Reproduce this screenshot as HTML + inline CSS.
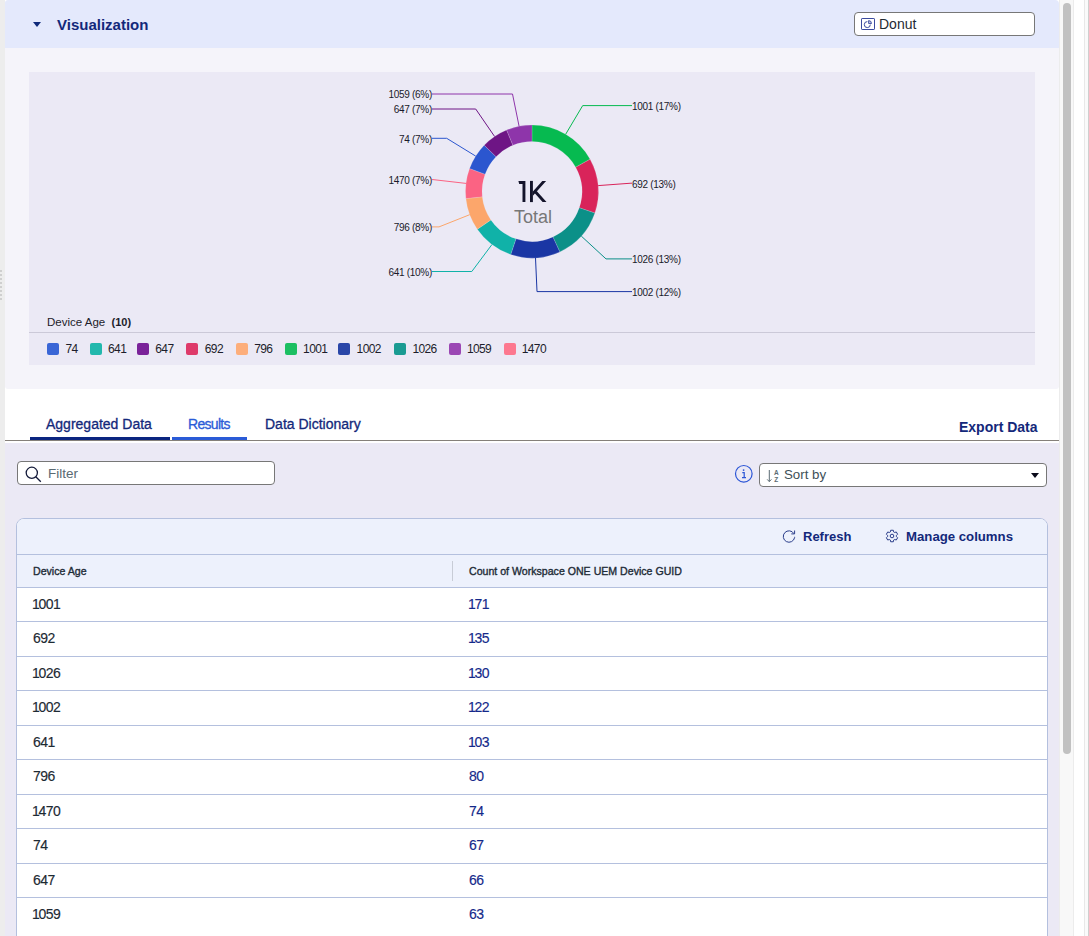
<!DOCTYPE html>
<html><head><meta charset="utf-8">
<style>
*{margin:0;padding:0;box-sizing:border-box}
html,body{width:1089px;height:936px;overflow:hidden;background:#fff;font-family:"Liberation Sans",sans-serif}
.a{position:absolute}
.t{position:absolute;white-space:nowrap;line-height:1}
#strip{left:0;top:0;width:5px;height:936px;background:#ededed}
#hdr{left:5px;top:0;width:1054px;height:48px;background:#e4e9fc;border-top-left-radius:3px;border-top-right-radius:4px}
#sec1{left:5px;top:48px;width:1054px;height:341px;background:#f5f4fa;border-radius:0 0 3px 3px}
#chart{left:29px;top:72px;width:1006px;height:293px;background:#ebe9f5}
#sec2{left:5px;top:389px;width:1054px;height:54px;background:#fff}
#sec3{left:5px;top:443px;width:1054px;height:493px;background:#ebe9f5}
.box{position:absolute;background:#fff;border:1px solid #777;border-radius:4px}
.card{left:16px;top:518px;width:1032px;height:430px;background:#fff;border:1px solid #b4c0de;border-radius:8px 8px 0 0;overflow:hidden}
.c1{left:33px;font-size:14px;color:#1d2a33;letter-spacing:-0.5px;-webkit-text-stroke:0.15px}
.c2{left:469px;font-size:14px;color:#14298a;letter-spacing:-0.5px;-webkit-text-stroke:0.15px}
.dl{font-size:10px;color:#1a1a2a;letter-spacing:-0.3px}
.lt{font-size:12px;color:#1d1d2b;letter-spacing:-0.6px}
</style></head><body>
<div id="strip" class="a"></div>
<div class="a" style="left:0;top:270px;width:2px;height:30px;background:repeating-linear-gradient(#cfcfcf 0 2px,transparent 2px 4px)"></div>
<div id="hdr" class="a"></div>
<div id="sec1" class="a"></div>
<div id="chart" class="a"></div>
<div id="sec2" class="a"></div>
<div id="sec3" class="a"></div>

<!-- header -->
<svg class="a" style="left:33px;top:22px" width="8" height="5" viewBox="0 0 8 5"><path d="M0 0H8L4 5Z" fill="#0f2a7a"/></svg>
<div class="t" style="left:57px;top:17px;font-size:15px;font-weight:bold;color:#13287a">Visualization</div>
<div class="box" style="left:854px;top:12px;width:181px;height:24px"></div>
<svg class="a" style="left:861px;top:18px" width="14" height="12" viewBox="0 0 14 12"><rect x="0.5" y="0.5" width="13" height="11" rx="0.6" fill="none" stroke="#3a4a9e" stroke-width="1"/><path d="M6.3 3.6A3 3 0 1 0 9.3 6.6" fill="none" stroke="#3a4a9e" stroke-width="1"/><path d="M7.6 2.6A2.9 2.9 0 0 1 10.5 5.5H7.6Z" fill="#c5cbe6" stroke="#3a4a9e" stroke-width="0.9"/></svg>
<div class="t" style="left:879px;top:17px;font-size:14px;color:#1f2a33">Donut</div>

<!-- chart panel -->
<svg class="a" style="left:0;top:0" width="1089" height="400" viewBox="0 0 1089 400"><path d="M532.00 125.00A66.5 66.5 0 0 1 590.10 159.15L575.68 167.18A50 50 0 0 0 532.00 141.50Z" fill="#06ba50" stroke="#ebe9f5" stroke-width="0.3" stroke-opacity="0.6"/>
<path d="M590.10 159.15A66.5 66.5 0 0 1 594.89 213.11L579.29 207.75A50 50 0 0 0 575.68 167.18Z" fill="#d9245a" stroke="#ebe9f5" stroke-width="0.3" stroke-opacity="0.6"/>
<path d="M594.89 213.11A66.5 66.5 0 0 1 559.84 251.89L552.93 236.91A50 50 0 0 0 579.29 207.75Z" fill="#0b9088" stroke="#ebe9f5" stroke-width="0.3" stroke-opacity="0.6"/>
<path d="M559.84 251.89A66.5 66.5 0 0 1 510.69 254.49L515.97 238.86A50 50 0 0 0 552.93 236.91Z" fill="#1a36a4" stroke="#ebe9f5" stroke-width="0.3" stroke-opacity="0.6"/>
<path d="M510.69 254.49A66.5 66.5 0 0 1 477.28 229.29L490.86 219.91A50 50 0 0 0 515.97 238.86Z" fill="#10b2a8" stroke="#ebe9f5" stroke-width="0.3" stroke-opacity="0.6"/>
<path d="M477.28 229.29A66.5 66.5 0 0 1 465.88 198.62L482.29 196.85A50 50 0 0 0 490.86 219.91Z" fill="#fca66b" stroke="#ebe9f5" stroke-width="0.3" stroke-opacity="0.6"/>
<path d="M465.88 198.62A66.5 66.5 0 0 1 469.59 168.53L485.08 174.23A50 50 0 0 0 482.29 196.85Z" fill="#fb6383" stroke="#ebe9f5" stroke-width="0.3" stroke-opacity="0.6"/>
<path d="M469.59 168.53A66.5 66.5 0 0 1 484.22 145.25L496.07 156.73A50 50 0 0 0 485.08 174.23Z" fill="#2b56cf" stroke="#ebe9f5" stroke-width="0.3" stroke-opacity="0.6"/>
<path d="M484.22 145.25A66.5 66.5 0 0 1 506.62 130.03L512.92 145.28A50 50 0 0 0 496.07 156.73Z" fill="#6e1585" stroke="#ebe9f5" stroke-width="0.3" stroke-opacity="0.6"/>
<path d="M506.62 130.03A66.5 66.5 0 0 1 532.00 125.00L532.00 141.50A50 50 0 0 0 512.92 145.28Z" fill="#8e35aa" stroke="#ebe9f5" stroke-width="0.3" stroke-opacity="0.6"/>
<path d="M432 94H512.5L519.1 126.3" fill="none" stroke="#8e35aa" stroke-width="1"/>
<path d="M432 109H475.7L494.6 136.5" fill="none" stroke="#6e1585" stroke-width="1"/>
<path d="M432 138.3H446.7L475.7 156.1" fill="none" stroke="#2b56cf" stroke-width="1"/>
<path d="M432 179.6H433L466 183.4" fill="none" stroke="#fb6383" stroke-width="1"/>
<path d="M432 226.9H439L469.7 214.7" fill="none" stroke="#fca66b" stroke-width="1"/>
<path d="M432 271.5H471.8L491.9 244.6" fill="none" stroke="#10b2a8" stroke-width="1"/>
<path d="M632 105.6H582.7L565.7 134.2" fill="none" stroke="#06ba50" stroke-width="1"/>
<path d="M632 183.2H631L598.2 185.6" fill="none" stroke="#d9245a" stroke-width="1"/>
<path d="M632 258.9H606L581.3 236.1" fill="none" stroke="#0b9088" stroke-width="1"/>
<path d="M632 291.6H537L535.5 257.9" fill="none" stroke="#1a36a4" stroke-width="1"/></svg>
<div class="t dl" style="right:657px;top:90.3px">1059 (6%)</div>
<div class="t dl" style="right:657px;top:105.3px">647 (7%)</div>
<div class="t dl" style="right:657px;top:134.6px">74 (7%)</div>
<div class="t dl" style="right:657px;top:175.9px">1470 (7%)</div>
<div class="t dl" style="right:657px;top:223.2px">796 (8%)</div>
<div class="t dl" style="right:657px;top:267.8px">641 (10%)</div>
<div class="t dl" style="left:632px;top:101.9px">1001 (17%)</div>
<div class="t dl" style="left:632px;top:179.5px">692 (13%)</div>
<div class="t dl" style="left:632px;top:255.2px">1026 (13%)</div>
<div class="t dl" style="left:632px;top:287.9px">1002 (12%)</div>
<svg class="a" style="left:0;top:0" width="600" height="240" viewBox="0 0 600 240"><path d="M518.4 181.1L525.4 180.9V202.1H522.5V183.9H519.2Z" fill="#14142b"/><path d="M530 180.9H532.9V202.1H530Z" fill="#14142b"/><path d="M532.9 191.6L542.3 180.9H546.1L532.9 195.8Z M535.1 189.2L546.5 202.1H542.6L533.2 191.5Z" fill="#14142b"/></svg>
<div class="t" style="left:514px;top:207.5px;font-size:18px;color:#777">Total</div>
<div class="t" style="left:47px;top:317px;font-size:11.5px;color:#1d1d2b">Device Age&nbsp; <b style="font-size:11px">(10)</b></div>
<div class="a" style="left:29px;top:332px;width:1006px;height:1px;background:#cbc9d8"></div>
<div class="a" style="left:47px;top:343px;width:12px;height:12px;border-radius:2px;background:#3a66d6"></div>
<div class="t lt" style="left:65.5px;top:343px">74</div>
<div class="a" style="left:90px;top:343px;width:12px;height:12px;border-radius:2px;background:#22b8ad"></div>
<div class="t lt" style="left:108px;top:343px">641</div>
<div class="a" style="left:137px;top:343px;width:12px;height:12px;border-radius:2px;background:#7a2299"></div>
<div class="t lt" style="left:155.3px;top:343px">647</div>
<div class="a" style="left:186px;top:343px;width:12px;height:12px;border-radius:2px;background:#de3a6a"></div>
<div class="t lt" style="left:204.8px;top:343px">692</div>
<div class="a" style="left:236px;top:343px;width:12px;height:12px;border-radius:2px;background:#fdae7b"></div>
<div class="t lt" style="left:254.2px;top:343px">796</div>
<div class="a" style="left:285px;top:343px;width:12px;height:12px;border-radius:2px;background:#1cbf62"></div>
<div class="t lt" style="left:303.1px;top:343px">1001</div>
<div class="a" style="left:338px;top:343px;width:12px;height:12px;border-radius:2px;background:#2a46a8"></div>
<div class="t lt" style="left:356.6px;top:343px">1002</div>
<div class="a" style="left:394px;top:343px;width:12px;height:12px;border-radius:2px;background:#1a9b92"></div>
<div class="t lt" style="left:412.4px;top:343px">1026</div>
<div class="a" style="left:449px;top:343px;width:12px;height:12px;border-radius:2px;background:#9b47b4"></div>
<div class="t lt" style="left:466.9px;top:343px">1059</div>
<div class="a" style="left:504px;top:343px;width:12px;height:12px;border-radius:2px;background:#fd788f"></div>
<div class="t lt" style="left:521.7px;top:343px">1470</div>

<!-- tabs -->
<div class="t" style="left:46px;top:417px;font-size:14px;-webkit-text-stroke:0.3px;color:#13287a">Aggregated Data</div>
<div class="a" style="left:30px;top:437px;width:140px;height:3px;background:#0b2580"></div>
<div class="t" style="left:188px;top:417px;font-size:14px;-webkit-text-stroke:0.3px;color:#2a5bd7;letter-spacing:-0.7px">Results</div>
<div class="a" style="left:172px;top:437px;width:75px;height:3px;background:#2a5bd7"></div>
<div class="t" style="left:265px;top:417px;font-size:14px;-webkit-text-stroke:0.3px;color:#13287a">Data Dictionary</div>
<div class="t" style="left:959px;top:420px;font-size:14px;font-weight:bold;color:#13287a">Export Data</div>
<div class="a" style="left:5px;top:440px;width:1054px;height:1px;background:#85807a"></div>

<!-- filter / sort -->
<div class="box" style="left:17px;top:461px;width:258px;height:24px"></div>
<svg class="a" style="left:24px;top:465px" width="20" height="20" viewBox="0 0 20 20"><circle cx="7.8" cy="7.8" r="5.6" fill="none" stroke="#141a3a" stroke-width="1.3"/><path d="M11.8 11.8L16.8 16.8" stroke="#141a3a" stroke-width="1.3"/></svg>
<div class="t" style="left:48px;top:467px;font-size:13.5px;color:#5a6a72">Filter</div>
<svg class="a" style="left:734px;top:464px" width="20" height="20" viewBox="0 0 20 20"><circle cx="9.8" cy="9.8" r="8.3" fill="none" stroke="#2b55d6" stroke-width="1.2"/><circle cx="9.6" cy="6.1" r="0.9" fill="#2b55d6"/><path d="M8.3 8.6H10.2V13.6M8 13.7H12" fill="none" stroke="#2b55d6" stroke-width="1.2"/></svg>
<div class="box" style="left:759px;top:463px;width:288px;height:24px"></div>
<svg class="a" style="left:766px;top:469px" width="14" height="14" viewBox="0 0 14 14"><path d="M3.3 1V12.6M1.2 10.4L3.3 12.6L5.4 10.4" fill="none" stroke="#5b6b73" stroke-width="1"/><text x="8" y="6" font-size="6.5" font-weight="bold" font-family="Liberation Sans" fill="#5b6b73">A</text><text x="8.2" y="13.2" font-size="6.5" font-weight="bold" font-family="Liberation Sans" fill="#5b6b73">Z</text></svg>
<div class="t" style="left:784px;top:468.4px;font-size:13.3px;color:#3d4f58">Sort by</div>
<svg class="a" style="left:1031px;top:473px" width="8" height="5" viewBox="0 0 8 5"><path d="M0 0H8L4 5Z" fill="#0a0a1a"/></svg>

<!-- table -->
<div class="a card"></div>
<div class="a" style="left:17px;top:519px;width:1030px;height:68px;background:#edf1fc;border-radius:7px 7px 0 0"></div>
<div class="a" style="left:17px;top:554px;width:1030px;height:1px;background:#b4c0de"></div>
<div class="a" style="left:17px;top:587px;width:1030px;height:1px;background:#b4c0de"></div>
<svg class="a" style="left:781px;top:529px" width="16" height="15" viewBox="0 0 16 15"><path d="M12.9 4.6A5.7 5.7 0 1 0 13.6 8.6V7.8" fill="none" stroke="#2a3d8a" stroke-width="1"/><path d="M13.6 1.5V4.9H10.3" fill="none" stroke="#2a3d8a" stroke-width="1"/></svg>
<div class="t" style="left:803px;top:529.5px;font-size:13px;font-weight:bold;color:#13287a">Refresh</div>
<svg class="a" style="left:885px;top:529px" width="14" height="14" viewBox="0 0 14 14"><path d="M5.67 1.25 L8.33 1.25 L8.75 3.07 L9.53 3.52 L11.31 2.98 L12.64 5.28 L11.28 6.55 L11.28 7.45 L12.64 8.72 L11.31 11.02 L9.53 10.48 L8.75 10.93 L8.33 12.75 L5.67 12.75 L5.25 10.93 L4.47 10.48 L2.69 11.02 L1.36 8.72 L2.72 7.45 L2.72 6.55 L1.36 5.28 L2.69 2.98 L4.47 3.52 L5.25 3.07Z" fill="none" stroke="#2a3d8a" stroke-width="1" stroke-linejoin="round"/><circle cx="7" cy="7" r="1.8" fill="none" stroke="#2a3d8a" stroke-width="1"/></svg>
<div class="t" style="left:906px;top:529.5px;font-size:13.2px;font-weight:bold;color:#13287a">Manage columns</div>
<div class="t" style="left:33px;top:566.3px;font-size:10.6px;-webkit-text-stroke:0.35px;color:#1d2b36">Device Age</div>
<div class="a" style="left:452px;top:561px;width:1px;height:20px;background:#c8ccd6"></div>
<div class="t" style="left:469px;top:566.3px;font-size:10.6px;-webkit-text-stroke:0.35px;color:#1d2b36">Count of Workspace ONE UEM Device GUID</div>
<div class="a" style="left:17px;top:621px;width:1030px;height:1px;background:#b4c0de"></div>
<div class="t c1" style="top:596.8px"><span style="letter-spacing:-1.3px;margin-left:-1px">1</span>00<span style="letter-spacing:-1.3px">1</span></div>
<div class="t c2" style="top:596.8px"><span style="letter-spacing:-1.3px;margin-left:-1px">1</span>7<span style="letter-spacing:-1.3px">1</span></div>
<div class="a" style="left:17px;top:656px;width:1030px;height:1px;background:#b4c0de"></div>
<div class="t c1" style="top:630.8px">692</div>
<div class="t c2" style="top:630.8px"><span style="letter-spacing:-1.3px;margin-left:-1px">1</span>35</div>
<div class="a" style="left:17px;top:690px;width:1030px;height:1px;background:#b4c0de"></div>
<div class="t c1" style="top:665.8px"><span style="letter-spacing:-1.3px;margin-left:-1px">1</span>026</div>
<div class="t c2" style="top:665.8px"><span style="letter-spacing:-1.3px;margin-left:-1px">1</span>30</div>
<div class="a" style="left:17px;top:725px;width:1030px;height:1px;background:#b4c0de"></div>
<div class="t c1" style="top:699.8px"><span style="letter-spacing:-1.3px;margin-left:-1px">1</span>002</div>
<div class="t c2" style="top:699.8px"><span style="letter-spacing:-1.3px;margin-left:-1px">1</span>22</div>
<div class="a" style="left:17px;top:759px;width:1030px;height:1px;background:#b4c0de"></div>
<div class="t c1" style="top:734.8px">64<span style="letter-spacing:-1.3px">1</span></div>
<div class="t c2" style="top:734.8px"><span style="letter-spacing:-1.3px;margin-left:-1px">1</span>03</div>
<div class="a" style="left:17px;top:794px;width:1030px;height:1px;background:#b4c0de"></div>
<div class="t c1" style="top:768.8px">796</div>
<div class="t c2" style="top:768.8px">80</div>
<div class="a" style="left:17px;top:828px;width:1030px;height:1px;background:#b4c0de"></div>
<div class="t c1" style="top:803.8px"><span style="letter-spacing:-1.3px;margin-left:-1px">1</span>470</div>
<div class="t c2" style="top:803.8px">74</div>
<div class="a" style="left:17px;top:863px;width:1030px;height:1px;background:#b4c0de"></div>
<div class="t c1" style="top:837.8px">74</div>
<div class="t c2" style="top:837.8px">67</div>
<div class="a" style="left:17px;top:897px;width:1030px;height:1px;background:#b4c0de"></div>
<div class="t c1" style="top:872.8px">647</div>
<div class="t c2" style="top:872.8px">66</div>
<div class="a" style="left:17px;top:937px;width:1030px;height:1px;background:#b4c0de"></div>
<div class="t c1" style="top:906.8px"><span style="letter-spacing:-1.3px;margin-left:-1px">1</span>059</div>
<div class="t c2" style="top:906.8px">63</div>

<!-- scrollbar -->
<div class="a" style="left:1059px;top:0;width:15px;height:936px;background:#f8f8f8;border-left:1px solid #ececec;border-right:1px solid #ececec"></div>
<div class="a" style="left:1063px;top:3px;width:8px;height:751px;background:#c1c1c1;border-radius:4px"></div>
<div class="a" style="left:1084px;top:0;width:5px;height:936px;background:#fafafa;border-left:1px solid #e8e8e8;border-right:1px solid #cfcfcf"></div>
</body></html>
